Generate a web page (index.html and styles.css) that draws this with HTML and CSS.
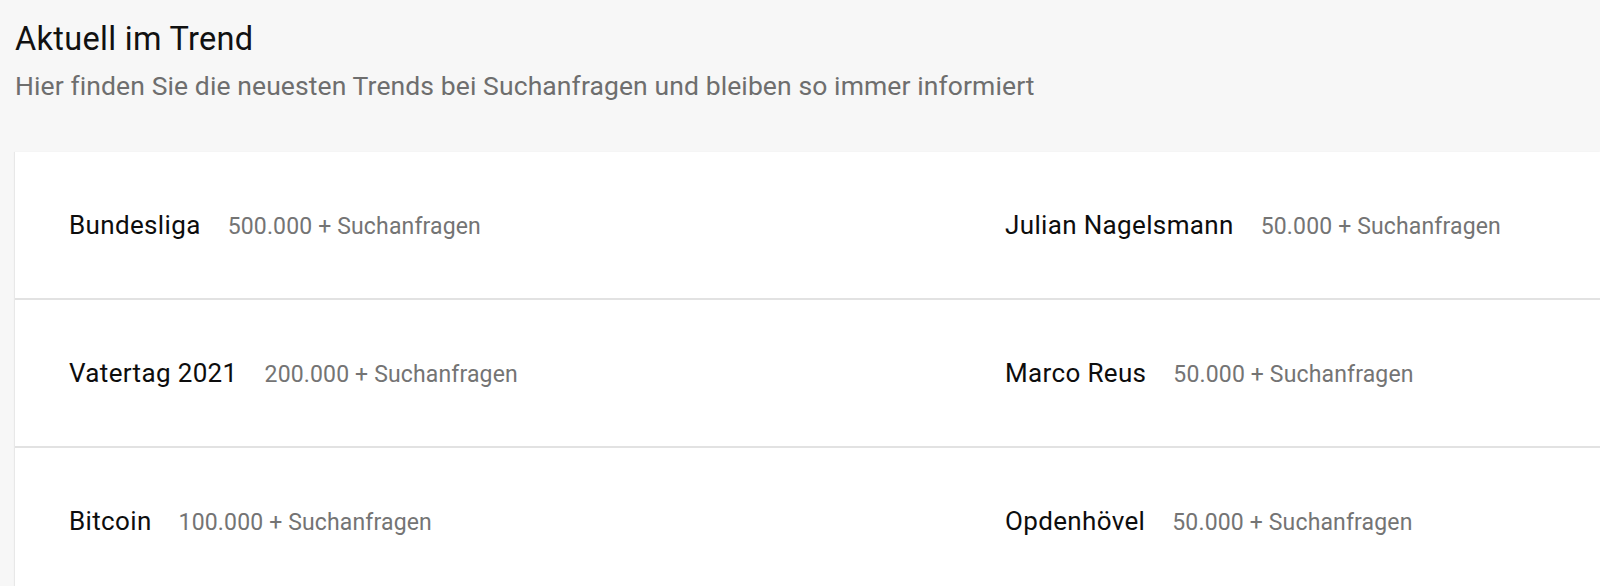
FILE: index.html
```html
<!DOCTYPE html>
<html lang="de">
<head>
<meta charset="utf-8">
<title>Aktuell im Trend</title>
<link rel="stylesheet" href="styles.css">
</head>
<body>
<header class="intro">
  <h1 class="title">Aktuell im Trend</h1>
  <p class="subtitle">Hier finden Sie die neuesten Trends bei Suchanfragen und bleiben so immer informiert</p>
</header>
<section class="card">
  <div class="row">
    <div class="item"><span class="name">Bundesliga</span><span class="count">500.000 + Suchanfragen</span></div>
    <div class="item"><span class="name">Julian Nagelsmann</span><span class="count">50.000 + Suchanfragen</span></div>
  </div>
  <div class="row">
    <div class="item"><span class="name">Vatertag 2021</span><span class="count">200.000 + Suchanfragen</span></div>
    <div class="item"><span class="name">Marco Reus</span><span class="count">50.000 + Suchanfragen</span></div>
  </div>
  <div class="row">
    <div class="item"><span class="name">Bitcoin</span><span class="count">100.000 + Suchanfragen</span></div>
    <div class="item"><span class="name">Opdenhövel</span><span class="count">50.000 + Suchanfragen</span></div>
  </div>
</section>
</body>
</html>
```
FILE: styles.css
```css
html, body {
  margin: 0;
  padding: 0;
  background: #f7f7f7;
  overflow: hidden;
}
body {
  font-family: Roboto, "Liberation Sans", Arial, sans-serif;
  color: #111111;
  width: 1600px;
  height: 586px;
}
.intro {
  padding: 20px 15px 0 15px;
}
.title {
  margin: 0;
  font-size: 32.5px;
  line-height: 38px;
  font-weight: 400;
  letter-spacing: 0.3px;
  color: #111111;
}
.subtitle {
  margin: 14px 0 0 0;
  font-size: 26.5px;
  line-height: 28px;
  letter-spacing: 0.1px;
  color: #6e6e6e;
}
.card {
  margin: 52px 0 0 15px;
  background: #ffffff;
  box-shadow: -1px 0 1px rgba(0, 0, 0, 0.06);
}
.row {
  display: grid;
  grid-template-columns: 936px 1fr;
  height: 146px;
  box-sizing: content-box;
  align-items: center;
  padding: 0 54px;
  border-bottom: 2px solid #e2e2e2;
}
.item {
  display: flex;
  align-items: baseline;
  white-space: nowrap;
  padding-top: 1px;
}
.name {
  font-size: 26px;
  line-height: 28px;
  letter-spacing: 0.35px;
  color: #0d0d0d;
}
.count {
  margin-left: 27px;
  font-size: 23px;
  line-height: 28px;
  letter-spacing: 0.15px;
  color: #747474;
}
```
